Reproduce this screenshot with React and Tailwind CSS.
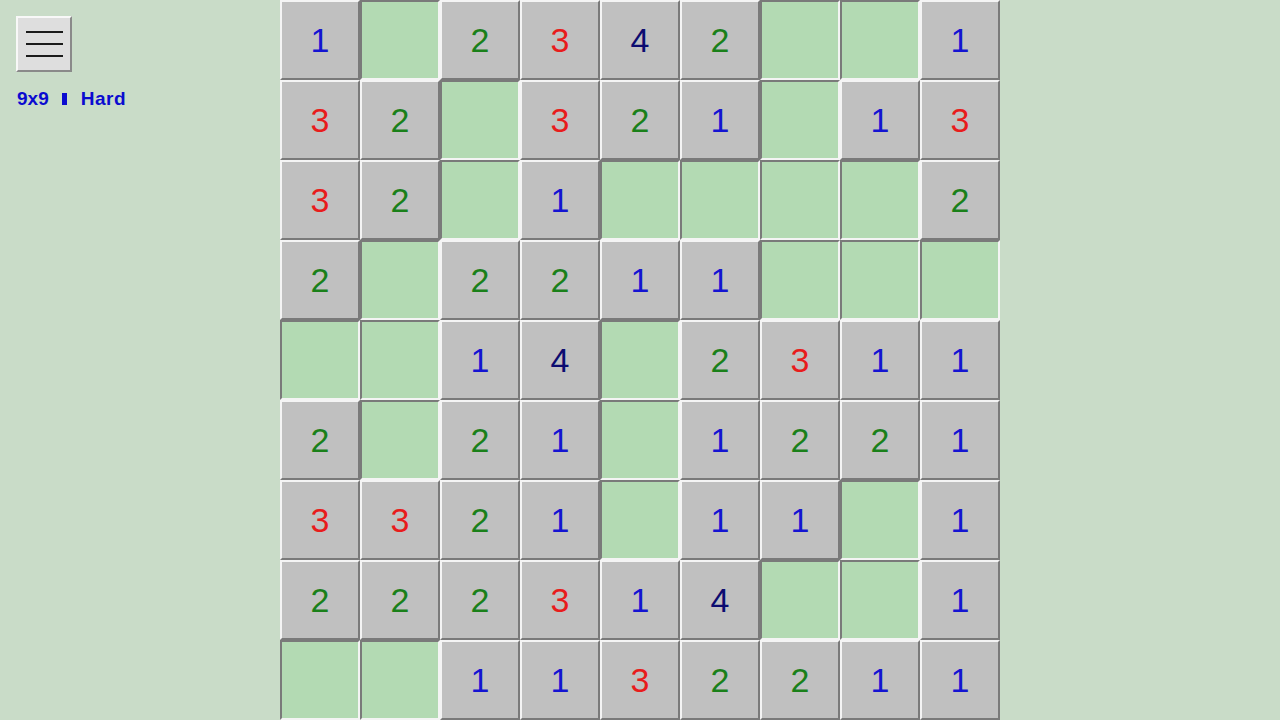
import React from "react";

const grid = [
  [1, 0, 2, 3, 4, 2, 0, 0, 1],
  [3, 2, 0, 3, 2, 1, 0, 1, 3],
  [3, 2, 0, 1, 0, 0, 0, 0, 2],
  [2, 0, 2, 2, 1, 1, 0, 0, 0],
  [0, 0, 1, 4, 0, 2, 3, 1, 1],
  [2, 0, 2, 1, 0, 1, 2, 2, 1],
  [3, 3, 2, 1, 0, 1, 1, 0, 1],
  [2, 2, 2, 3, 1, 4, 0, 0, 1],
  [0, 0, 1, 1, 3, 2, 2, 1, 1],
];

const colors = {
  1: "text-[#1414d2]",
  2: "text-[#1a801a]",
  3: "text-[#e81c1c]",
  4: "text-[#0c0c70]",
};

function Cell({ v }) {
  if (v === 0) {
    return (
      <div className="w-[80px] h-[80px] bg-[#b3dab3] border-2 border-t-[#7a7a7a] border-l-[#7a7a7a] border-b-[#f4f4f4] border-r-[#f4f4f4]" />
    );
  }
  return (
    <div
      className={`w-[80px] h-[80px] bg-[#c0c0c0] border-2 border-t-[#f4f4f4] border-l-[#f4f4f4] border-b-[#7a7a7a] border-r-[#7a7a7a] flex items-center justify-center text-[34px] leading-none ${colors[v]}`}
      style={{ fontFamily: '"Liberation Sans", Arial, sans-serif' }}
    >
      {v}
    </div>
  );
}

export default function App() {
  return (
    <div className="w-[1280px] h-[720px] bg-[#c9dcc8] grid grid-cols-[280px_720px_280px] overflow-hidden">
      <div className="pt-[16px] pl-[16px] flex flex-col">
        <div className="w-[56px] h-[56px] bg-[#dedede] border-2 border-t-[#f8f8f8] border-l-[#f8f8f8] border-b-[#8a8a8a] border-r-[#8a8a8a] flex flex-col items-center justify-center gap-[10px]">
          <div className="w-[37px] h-[2px] bg-[#1a1a1a]" />
          <div className="w-[37px] h-[2px] bg-[#1a1a1a]" />
          <div className="w-[37px] h-[2px] bg-[#1a1a1a]" />
        </div>
        <div
          className="mt-[17px] pl-[1px] flex items-center text-[19px] font-bold text-[#0b0bd0] leading-none"
          style={{ fontFamily: '"Liberation Sans", Arial, sans-serif' }}
        >
          <span>9x9</span>
          <span className="inline-block w-[5px] h-[12px] bg-[#0b0bd0] ml-[13px] mr-[14px]" />
          <span className="tracking-[0.5px]">Hard</span>
        </div>
      </div>
      <div className="grid grid-cols-9">
        {grid.map((row, r) =>
          row.map((v, c) => <Cell key={`${r}-${c}`} v={v} />)
        )}
      </div>
      <div />
    </div>
  );
}
